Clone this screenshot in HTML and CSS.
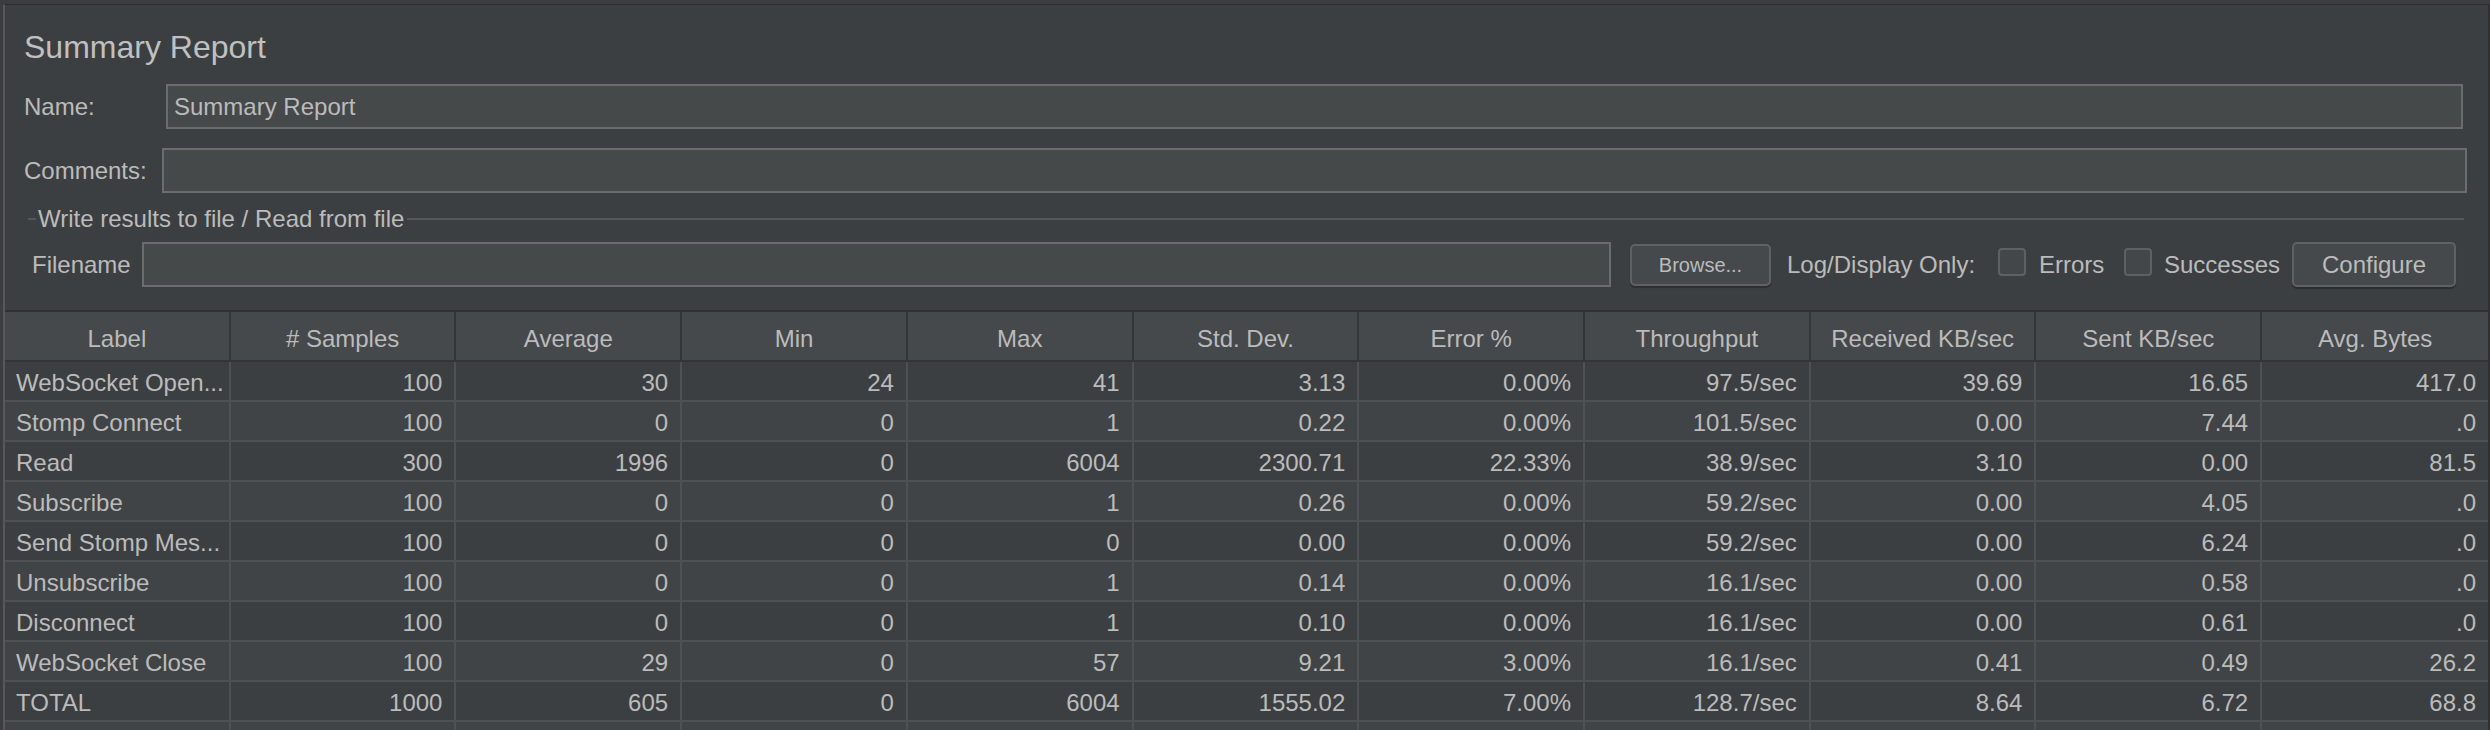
FILE: index.html
```html
<!DOCTYPE html>
<html lang="en">
<head>
<meta charset="utf-8">
<title>Summary Report</title>
<link rel="stylesheet" href="styles.css">
</head>
<body>
<div class="app">
  <div class="form">
    <h1 class="title">Summary Report</h1>
    <div class="row row-name">
      <span class="lbl lbl-name">Name:</span>
      <div class="field">Summary Report</div>
    </div>
    <div class="row row-comments">
      <span class="lbl lbl-comments">Comments:</span>
      <div class="field"></div>
    </div>
    <div class="group-title">
      <span class="dash"></span>
      <span class="legend">Write results to file / Read from file</span>
      <span class="rule"></span>
    </div>
    <div class="row row-file">
      <span class="lbl lbl-file">Filename</span>
      <div class="field"></div>
      <button class="btn btn-browse">Browse...</button>
      <span class="log">Log/Display Only:</span>
      <span class="check check-errors"></span>
      <span class="check-lbl lbl-errors">Errors</span>
      <span class="check check-success"></span>
      <span class="check-lbl lbl-success">Successes</span>
      <button class="btn btn-config">Configure</button>
    </div>
  </div>
  <table class="grid">
    <thead>
      <tr>
        <th>Label</th><th># Samples</th><th>Average</th><th>Min</th><th>Max</th><th>Std. Dev.</th><th>Error %</th><th>Throughput</th><th>Received KB/sec</th><th>Sent KB/sec</th><th>Avg. Bytes</th>
      </tr>
    </thead>
    <tbody>
      <tr><td class="name">WebSocket Open...</td><td>100</td><td>30</td><td>24</td><td>41</td><td>3.13</td><td>0.00%</td><td>97.5/sec</td><td>39.69</td><td>16.65</td><td>417.0</td></tr>
      <tr><td class="name">Stomp Connect</td><td>100</td><td>0</td><td>0</td><td>1</td><td>0.22</td><td>0.00%</td><td>101.5/sec</td><td>0.00</td><td>7.44</td><td>.0</td></tr>
      <tr><td class="name">Read</td><td>300</td><td>1996</td><td>0</td><td>6004</td><td>2300.71</td><td>22.33%</td><td>38.9/sec</td><td>3.10</td><td>0.00</td><td>81.5</td></tr>
      <tr><td class="name">Subscribe</td><td>100</td><td>0</td><td>0</td><td>1</td><td>0.26</td><td>0.00%</td><td>59.2/sec</td><td>0.00</td><td>4.05</td><td>.0</td></tr>
      <tr><td class="name">Send Stomp Mes...</td><td>100</td><td>0</td><td>0</td><td>0</td><td>0.00</td><td>0.00%</td><td>59.2/sec</td><td>0.00</td><td>6.24</td><td>.0</td></tr>
      <tr><td class="name">Unsubscribe</td><td>100</td><td>0</td><td>0</td><td>1</td><td>0.14</td><td>0.00%</td><td>16.1/sec</td><td>0.00</td><td>0.58</td><td>.0</td></tr>
      <tr><td class="name">Disconnect</td><td>100</td><td>0</td><td>0</td><td>1</td><td>0.10</td><td>0.00%</td><td>16.1/sec</td><td>0.00</td><td>0.61</td><td>.0</td></tr>
      <tr><td class="name">WebSocket Close</td><td>100</td><td>29</td><td>0</td><td>57</td><td>9.21</td><td>3.00%</td><td>16.1/sec</td><td>0.41</td><td>0.49</td><td>26.2</td></tr>
      <tr><td class="name">TOTAL</td><td>1000</td><td>605</td><td>0</td><td>6004</td><td>1555.02</td><td>7.00%</td><td>128.7/sec</td><td>8.64</td><td>6.72</td><td>68.8</td></tr>
      <tr><td class="name"></td><td></td><td></td><td></td><td></td><td></td><td></td><td></td><td></td><td></td><td></td></tr>
    </tbody>
  </table>
</div>
</body>
</html>
```

FILE: styles.css
```css
html, body {
  margin: 0;
  padding: 0;
  height: 730px;
  overflow: hidden;
  background: #3b3d3f;
}

body {
  font-family: "Liberation Sans", Arial, Helvetica, sans-serif;
  font-size: 24px;
  color: #bbbbbb;
}

.app {
  margin-top: 4px;
  margin-left: 3px;
  height: 725px;
  border-top: 1px solid #2c2e30;
  border-left: 2px solid #56595b;
  border-right: 2px solid #2f3133;
  background: #3c3f41;
  overflow: hidden;
}

.form {
  padding: 22px 0 0 19px;
}

.title {
  margin: 0;
  height: 40px;
  font-size: 32px;
  line-height: 40px;
  font-weight: normal;
  color: #c0c0c0;
}

.row {
  display: flex;
  align-items: center;
  height: 45px;
}

.row-name { margin-top: 17px; margin-right: 25px; }
.row-comments { margin-top: 19px; margin-right: 21px; }
.row-file { margin-top: 11px; margin-left: 8px; margin-right: 32px; }

.lbl {
  flex-shrink: 0;
  white-space: nowrap;
}
.lbl-name { width: 142px; }
.lbl-comments { width: 138px; }
.lbl-file { width: 110px; }

.field {
  flex: 1;
  box-sizing: border-box;
  height: 45px;
  border: 2px solid #6a6c6e;
  background: #45494a;
  padding-left: 6px;
  line-height: 41px;
  white-space: nowrap;
  overflow: hidden;
}

.group-title {
  display: flex;
  align-items: center;
  height: 24px;
  margin: 14px 24px 0 4px;
}
.dash {
  width: 8px;
  height: 2px;
  background: #55585a;
  flex-shrink: 0;
}
.legend {
  margin: 0 3px 0 2px;
  line-height: 24px;
  white-space: nowrap;
}
.rule {
  flex: 1;
  height: 2px;
  background: #55585a;
}

.btn {
  flex-shrink: 0;
  box-sizing: border-box;
  font-family: inherit;
  color: #bbbbbb;
  background: #46494b;
  border: 2px solid #5f6264;
  border-radius: 5px;
  box-shadow: 0 2px 1px rgba(0, 0, 0, 0.28);
  padding: 0;
  text-align: center;
}
.btn-browse {
  width: 141px;
  height: 42px;
  margin-left: 19px;
  font-size: 20px;
  align-self: flex-start;
  margin-top: 2px;
}
.btn-config {
  width: 164px;
  height: 45px;
  margin-left: 15px;
  font-size: 24px;
}

.log {
  width: 189px;
  margin-left: 16px;
  white-space: nowrap;
  flex-shrink: 0;
}

.check {
  flex-shrink: 0;
  box-sizing: border-box;
  width: 28px;
  height: 28px;
  border: 2px solid #5e6164;
  border-radius: 4px;
  background: #43474a;
  align-self: flex-start;
  margin-top: 6px;
}
.check-errors { margin-left: 22px; }
.check-success { margin-left: 22px; }

.check-lbl {
  flex-shrink: 0;
  white-space: nowrap;
}
.lbl-errors { width: 63px; margin-left: 13px; }
.lbl-success { width: 113px; margin-left: 12px; }

.grid {
  margin-top: 23px;
  width: 100%;
  table-layout: fixed;
  border-collapse: separate;
  border-spacing: 0;
  border-top: 2px solid #2f3133;
  font-size: 24px;
}

.grid th {
  height: 42px;
  padding: 6px 0 0 0;
  line-height: 42px;
  font-weight: normal;
  text-align: center;
  background: #46494b;
  border-right: 2px solid #333537;
  border-bottom: 2px solid #333537;
  white-space: nowrap;
  overflow: hidden;
}

.grid td {
  height: 35px;
  padding: 3px 12px 0 10px;
  line-height: 35px;
  text-align: right;
  border-right: 2px solid #4e5154;
  border-bottom: 2px solid #4e5154;
  white-space: nowrap;
  overflow: hidden;
}

.grid th:last-child,
.grid td:last-child {
  border-right: none;
}

.grid td.name {
  text-align: left;
  padding-left: 11px;
}

.grid tbody tr:nth-child(odd) td { background: #3c3f41; }
.grid tbody tr:nth-child(even) td { background: #414446; }
```
